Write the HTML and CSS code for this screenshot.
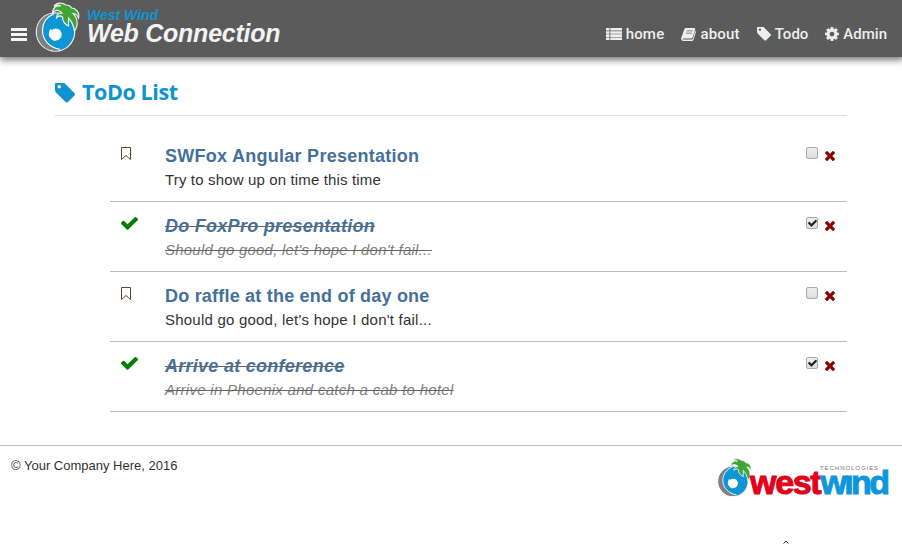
FILE: index.html
```html
<!DOCTYPE html>
<html lang="en">
<head>
<meta charset="utf-8">
<title>ToDo List</title>
<link rel="stylesheet" href="styles.css">
</head>
<body>
<svg class="defs" width="0" height="0">
  <symbol id="tag" viewBox="128 192 1515 1451"><path d="M576 448q0-53-37.5-90.5t-90.5-37.5-90.5 37.5-37.5 90.5 37.5 90.5 90.5 37.5 90.5-37.5 37.5-90.5zm1067 576q0 53-37 90l-491 492q-39 37-91 37-53 0-90-37l-715-716q-38-37-64.5-101t-26.5-117v-416q0-52 38-90t90-38h416q53 0 117 26.5t102 64.5l715 714q37 39 37 91z"/></symbol>
  <symbol id="check" viewBox="121 270 1550 1252"><path d="M1671 566q0 40-28 68l-724 724-136 136q-28 28-68 28t-68-28l-136-136-362-362q-28-28-28-68t28-68l136-136q28-28 68-28t68 28l294 295 656-657q28-28 68-28t68 28l136 136q28 28 28 68z"/></symbol>
  <symbol id="times" viewBox="302 366 1188 1188"><path d="M1490 1322q0 40-28 68l-136 136q-28 28-68 28t-68-28l-294-294-294 294q-28 28-68 28t-68-28l-136-136q-28-28-28-68t28-68l294-294-294-294q-28-28-28-68t28-68l136-136q28-28 68-28t68 28l294 294 294-294q28-28 68-28t68 28l136 136q28 28 28 68t-28 68l-294 294 294 294q28 28 28 68z"/></symbol>
  <symbol id="cog" viewBox="128 128 1536 1536"><path d="M1152 896q0-106-75-181t-181-75-181 75-75 181 75 181 181 75 181-75 75-181zm512-109v222q0 12-8 23t-20 13l-185 28q-19 54-39 91 35 50 107 138 10 12 10 25t-9 23q-27 37-99 108t-94 71q-12 0-26-9l-138-108q-44 23-91 38-16 136-29 186-7 28-36 28h-222q-14 0-24.5-8.5t-11.5-21.5l-28-184q-49-16-90-37l-141 107q-10 9-25 9-14 0-25-11-126-114-165-168-7-10-7-23 0-12 8-23 15-21 51-66.5t54-70.5q-27-50-41-99l-183-27q-13-2-21-12.5t-8-23.5v-222q0-12 8-23t19-13l186-28q14-46 39-92-40-57-107-138-10-12-10-24 0-10 9-23 26-36 98.5-107.5t94.5-71.5q13 0 26 10l138 107q44-23 91-38 16-136 29-186 7-28 36-28h222q14 0 24.5 8.5t11.5 21.5l28 184q49 16 90 37l142-107q9-9 24-9 13 0 25 10 129 119 165 170 7 8 7 22 0 12-8 23-15 21-51 66.5t-54 70.5q26 50 41 98l183 28q13 2 21 12.5t8 23.5z"/></symbol>
  <symbol id="list" viewBox="0 0 16 12"><path d="M0 0h3.500v2.600H0zM4.300 0H16v2.600H4.300zM0 3.150h3.500v2.600H0zM4.300 3.150H16v2.600H4.300zM0 6.300h3.500v2.600H0zM4.300 6.300H16v2.600H4.300zM0 9.450h3.500V12H0zM4.300 9.450H16V12H4.300z"/></symbol>
  <symbol id="book" viewBox="0 0 15 13"><path fill-rule="evenodd" d="M5 0H13q1.500 0 1.200 1.500L11.600 9.500Q11.200 10.500 10 10.500H2.300Q1.400 10.500 1.600 11.200 1.800 11.600 2.500 11.600H10.600Q11.600 11.600 12 10.500L14.300 3Q15.200 3.400 14.900 4.300L12.500 11.800Q12.100 13 10.800 13H2.300Q.6 13 .2 11.300 0 10.200 .4 9.500L3.300 1.200Q3.700 0 5 0zM5.700 2.600l-.2.700h6l.2-.7zM5 4.800l-.2.700h6l.2-.7z"/></symbol>
  <symbol id="bookmark" viewBox="0 0 12 14"><path d="M1.500.5h9v12L6 8.500 1.500 12.500z" fill="none" stroke="currentColor" stroke-width="1" stroke-linejoin="round"/></symbol>
  <symbol id="wave" viewBox="0 0 46 52">
    <circle class="halo" cx="20.500" cy="31" r="19.800"/>
    <circle cx="20.500" cy="31" r="18.600" fill="#0d96d5"/>
    <path class="crest" d="M18 12.500C8 14 1.900 22 1.900 31c0 9 6.500 17.500 17 18.600 2.500.2 5-.3 7-1.300C15 46.500 7.500 39 7.500 29.500c0-7 4-13.500 10.500-17z"/>
    <path d="M19 12.800C11.500 16 7.500 22.500 7.500 29.500 7.500 39 14.500 46.500 25 48.300" fill="none" stroke="#fff" stroke-width="1.100"/>
    <path fill="#fff" d="M15.200 29.500c-2 5 0 9.500 5 10.500l3-6-5-4z"/>
    <path d="M16 28c-1.600 2.500-2 5.500-1 8" fill="none" stroke="#fff" stroke-width="1.200"/>
    <circle cx="20.800" cy="33.500" r="5.900" fill="#fff"/>
    <path class="leaf" d="M27 12C23 8 19.500 9 17.500 12.500c0-5.500 4-8.500 8.500-7.500C22.500 3.500 20.500 4 19 5.500 21 1.500 27 1 31 4c2.500 0 4.500 1 5.500 3C41 7 45 12 43.500 17c-1-3-3-4.500-5.500-4.500C43 17 43.500 25 39.500 30c-1-6-3-10-6-13v8c-4-2-6-5-6-9-2-1.500-4.500-1-6 1 0-3 2-5 5.500-5z"/>
  </symbol>
</svg>
<header class="bar">
  <div class="burger"><i></i><i></i><i></i></div>
  <svg class="logo"><use href="#wave"/></svg>
  <div class="brand"><span class="small">West Wind</span><span class="big">Web Connection</span></div>
  <nav>
    <a><svg class="i-list"><use href="#list"/></svg><span class="t-home">home</span></a>
    <a><svg class="i-book"><use href="#book"/></svg><span class="t-about">about</span></a>
    <a><svg class="i-tag"><use href="#tag"/></svg><span class="t-todo">Todo</span></a>
    <a><svg class="i-cog"><use href="#cog"/></svg><span class="t-admin">Admin</span></a>
  </nav>
</header>
<main>
  <h1><svg><use href="#tag"/></svg><span>ToDo List</span></h1>
  <ul>
    <li><svg class="open"><use href="#bookmark"/></svg><div class="text"><b class="w1">SWFox Angular Presentation</b><p class="d1">Try to show up on time this time</p></div><span class="box"></span><svg class="del"><use href="#times"/></svg></li>
    <li class="done"><svg class="tick"><use href="#check"/></svg><div class="text"><b class="w2">Do FoxPro presentation</b><p class="d2">Should go good, let's hope I don't fail...</p></div><span class="box"><svg><use href="#check"/></svg></span><svg class="del"><use href="#times"/></svg></li>
    <li><svg class="open"><use href="#bookmark"/></svg><div class="text"><b class="w3">Do raffle at the end of day one</b><p class="d3">Should go good, let's hope I don't fail...</p></div><span class="box"></span><svg class="del"><use href="#times"/></svg></li>
    <li class="done"><svg class="tick"><use href="#check"/></svg><div class="text"><b class="w4">Arrive at conference</b><p class="d4">Arrive in Phoenix and catch a cab to hotel</p></div><span class="box"><svg><use href="#check"/></svg></span><svg class="del"><use href="#times"/></svg></li>
  </ul>
</main>
<footer>
  <span class="copy">© Your Company Here, 2016</span>
  <div class="company">
    <svg class="mark"><use href="#wave"/></svg>
    <div class="word"><span class="tech">TECHNOLOGIES</span><span class="name"><span class="west">west</span><span class="wind">wınd</span></span></div>
  </div>
  <svg class="caret" viewBox="0 0 6 4"><path d="M.5 3.500 3 1l2.500 2.500" fill="none" stroke="#333"/></svg>
</footer>
</body>
</html>
```
FILE: styles.css
```css
* { box-sizing: border-box; }
body { margin: 0; height: 544px; overflow: hidden; background: #fff; color: #333; font-family: "Liberation Sans", Arial, sans-serif; }
svg { display: block; fill: currentColor; flex: none; }
.defs { position: absolute; }
.bar { height: 57px; background: #5b5b5b; color: #eee; display: flex; box-shadow: 1px 2px 7px 1px #777; }
.burger { width: 16px; margin: 28px 0 0 11px; display: flex; flex-direction: column; gap: 2px; }
.burger i { height: 3px; background: #f5f5f5; }
.logo { width: 46px; height: 52px; margin: 1px 0 0 8px; }
.halo { fill: #eee; }
.crest { fill: #808080; }
.leaf { fill: #3fa535; stroke: #eee; stroke-width: 1.200; }
.brand { margin-left: 6px; padding-top: 8px; font-weight: bold; font-style: italic; white-space: nowrap; display: flex; flex-direction: column; }
.small { font-size: 14px; line-height: 15px; color: #1193d2; }
.big { font-size: 25px; line-height: 21px; color: #f3f3f3; letter-spacing: -.25px; }
nav { display: flex; margin-left: auto; padding: 24px 15px 0 0; font: 500 15px/20px Roboto, sans-serif; }
nav a { display: flex; align-items: center; gap: 4px; height: 20px; margin-left: 17px; }
.t-home { letter-spacing: .2px; }
.t-about { letter-spacing: .2px; }
.i-list { width: 16px; height: 12px; }
.i-book { width: 15px; height: 13px; }
.i-tag { width: 14px; height: 14px; }
.i-cog { width: 14px; height: 14px; }
main { padding: 0 55px; height: 388px; }
h1 { margin: 0; height: 59px; padding-top: 21px; border-bottom: 1px solid #ddd; display: flex; color: #0d93d2; font: 700 21.500px/28px "Open Sans", sans-serif; letter-spacing: -.4px; }
h1 svg { width: 20px; height: 20px; margin: 5px 7px 0 0; }
ul { list-style: none; margin: 16px 0 0 55px; padding: 0; }
li { height: 70px; border-bottom: 1px solid #bbb; display: flex; align-items: flex-start; }
.open { width: 12px; height: 14px; margin: 15px 33px 0 10px; color: #5a4630; }
.tick { width: 17px; height: 14px; margin: 14px 27px 0 11px; color: #008000; }
.text { flex: 1; padding-top: 13px; white-space: nowrap; }
.text b { display: block; width: max-content; font-size: 18px; line-height: 22px; letter-spacing: .27px; color: #44709b; }
.text p { margin: 3px 0 0; width: max-content; font-size: 15px; line-height: 20px; letter-spacing: .22px; }
.text .w3 { letter-spacing: .21px; }
.text .d1 { letter-spacing: .15px; }
.text .d4 { letter-spacing: .28px; }
.done .text { font-style: italic; }
.done b, .done p { text-decoration: line-through #666 1px; }
.done p { color: #808080; }
.box { width: 12px; height: 12px; margin: 15px 7px 0 0; border: 1px solid #aaa; border-radius: 2px; background: linear-gradient(#eee, #ddd); display: flex; align-items: center; justify-content: center; }
.box svg { width: 9px; height: 8px; color: #222; }
.del { width: 10px; height: 10px; margin: 19px 12px 0 0; color: #8b0000; }
footer { border-top: 1px solid #bbb; height: 99px; display: flex; justify-content: space-between; padding: 11px 13px 0 11px; position: relative; }
.copy { font-size: 13px; line-height: 15px; padding-top: 1px; }
.company { display: flex; }
.mark { width: 36px; height: 41px; margin-right: -3px; }
.mark .halo { fill: #fff; }
.word { width: 139px; display: flex; flex-direction: column; }
.tech { font-size: 6px; line-height: 7px; letter-spacing: .95px; margin: 8px 0 0 70px; color: #777; white-space: nowrap; }
.name { font: bold 34px/28px "Liberation Sans", sans-serif; white-space: nowrap; margin-top: -4px; -webkit-text-stroke: 1px currentColor; }
.west { color: #e2001a; letter-spacing: -1.300px; }
.wind { color: #0d96db; letter-spacing: -2.600px; }
.caret { position: absolute; left: 783px; bottom: 0; width: 6px; height: 4px; }
```
